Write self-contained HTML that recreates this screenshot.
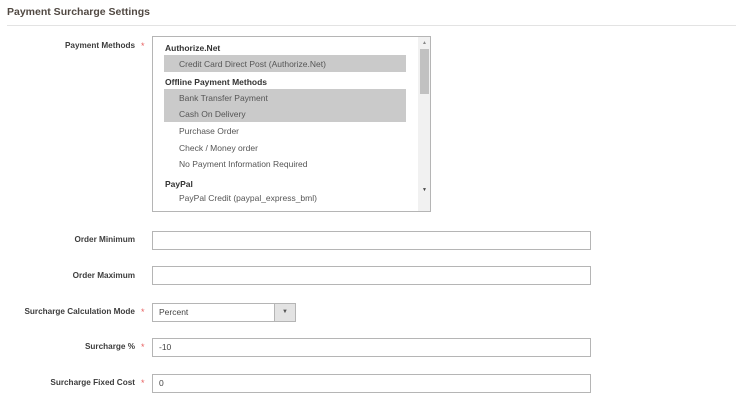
<!DOCTYPE html>
<html><head><style>
body{margin:0;width:743px;height:420px;background:#fff;font-family:"Liberation Sans",sans-serif;color:#333;position:relative;overflow:hidden}
.a{position:absolute}
.t{left:7px;top:6px;font-size:10.5px;font-weight:bold;color:#514943}
.hr{left:7px;top:25px;width:729px;height:1px;background:#e3e3e3}
.lbl{font-size:8.2px;font-weight:bold;color:#3d3d3d;text-align:right;width:135px;left:0}
.star{font-size:9px;color:#e86060;left:141px}
.inp{left:152px;width:437px;height:17px;border:1px solid #b5b5b5;background:#fff;font-size:8.5px;line-height:17px;text-indent:6px;color:#444}
.box{left:152px;top:36px;width:277px;height:174px;border:1px solid #b5b5b5}
.r{position:absolute;left:12px;font-size:8.5px}
.g{font-weight:bold;color:#333}
.o{left:26px;color:#555}
.hl{position:absolute;left:11px;width:242px;background:#cacaca}
</style></head><body>
<div class="a t">Payment Surcharge Settings</div>
<div class="a hr"></div>

<div class="a lbl" style="top:41px">Payment Methods</div><div class="a star" style="top:41px">*</div>
<div class="a box">
 <div class="hl" style="top:18px;height:17px"></div>
 <div class="hl" style="top:52px;height:33px"></div>
 <div class="r g" style="top:6px">Authorize.Net</div>
 <div class="r o" style="top:22px">Credit Card Direct Post (Authorize.Net)</div>
 <div class="r g" style="top:40px">Offline Payment Methods</div>
 <div class="r o" style="top:56px">Bank Transfer Payment</div>
 <div class="r o" style="top:72px">Cash On Delivery</div>
 <div class="r o" style="top:89px">Purchase Order</div>
 <div class="r o" style="top:106px">Check / Money order</div>
 <div class="r o" style="top:122px">No Payment Information Required</div>
 <div class="r g" style="top:142px">PayPal</div>
 <div class="r o" style="top:156px">PayPal Credit (paypal_express_bml)</div>
 <div style="position:absolute;right:0;top:0;width:12px;height:174px;background:#f1f1f1"></div>
 <div style="position:absolute;right:1px;top:12px;width:9px;height:45px;background:#c1c1c1"></div>
 <div style="position:absolute;right:3px;top:3px;font-size:5px;color:#888">▲</div>
 <div style="position:absolute;right:3px;top:150px;font-size:5px;color:#444">▼</div>
</div>

<div class="a lbl" style="top:235px">Order Minimum</div>
<div class="a inp" style="top:231px"></div>
<div class="a lbl" style="top:271px">Order Maximum</div>
<div class="a inp" style="top:266px"></div>
<div class="a lbl" style="top:307px">Surcharge Calculation Mode</div><div class="a star" style="top:307px">*</div>
<div class="a inp" style="top:303px;width:142px">Percent<div style="position:absolute;right:0;top:0;width:20px;height:17px;background:#e3e3e3;border-left:1px solid #b5b5b5;text-indent:0;text-align:center;font-size:6px;color:#555">▼</div></div>
<div class="a lbl" style="top:342px">Surcharge %</div><div class="a star" style="top:342px">*</div>
<div class="a inp" style="top:338px">-10</div>
<div class="a lbl" style="top:378px">Surcharge Fixed Cost</div><div class="a star" style="top:378px">*</div>
<div class="a inp" style="top:374px">0</div>
</body></html>
